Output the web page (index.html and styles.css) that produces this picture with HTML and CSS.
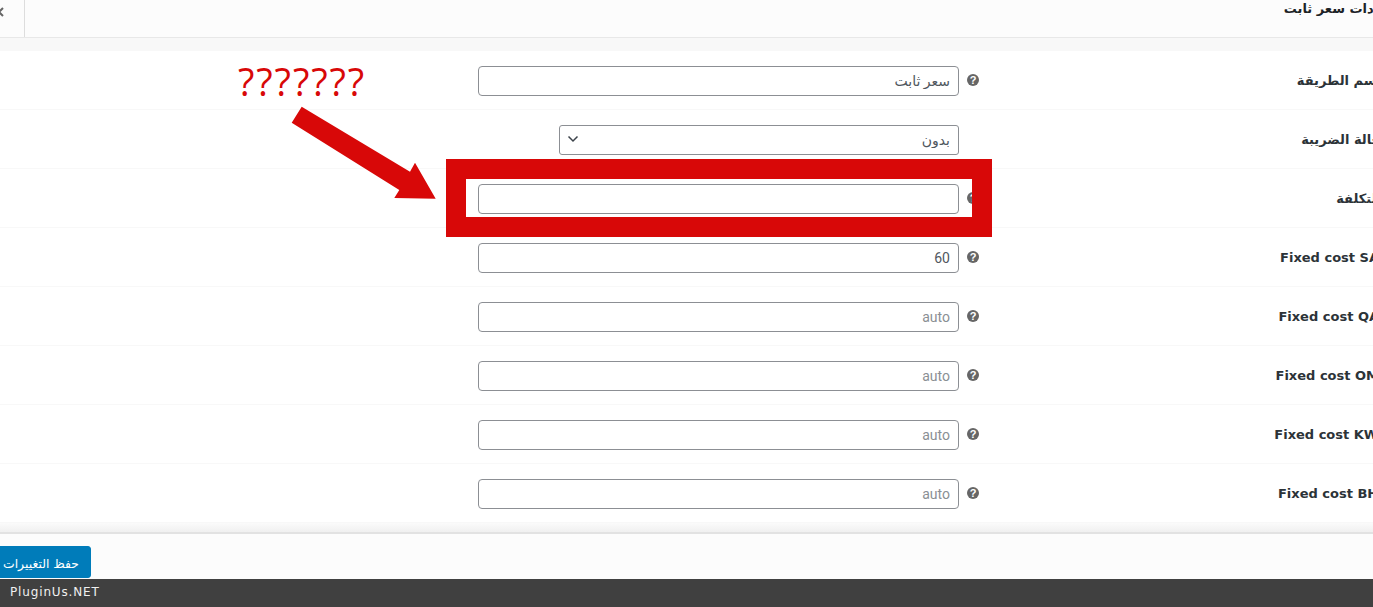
FILE: index.html
```html
<!DOCTYPE html>
<html lang="ar">
<head>
  <meta charset="UTF-8">
  <meta name="viewport" content="width=device-width, initial-scale=1.0">
  <title>إعدادات سعر ثابت</title>
  <link rel="stylesheet" href="styles.css">
</head>
<body>
  <div class="modal">
    <header class="modal-head">
      <div class="close-box">
        <svg class="close-icon" width="12" height="12" viewBox="0 0 12 12"><path d="M2 2l8 8M10 2l-8 8"/></svg>
      </div>
      <h2 class="modal-title" dir="rtl">إعدادات سعر ثابت</h2>
    </header>

    <div class="settings">
      <div class="row">
        <div class="field">
          <input class="text-input" type="text" dir="rtl" value="سعر ثابت">
          <span class="help">?</span>
        </div>
        <label class="row-label" dir="rtl">اسم الطريقة</label>
      </div>
      <div class="row">
        <div class="field field-select">
          <div class="select-wrap">
            <select class="select-input" dir="rtl"><option>بدون</option></select>
            <svg class="chevron" width="14" height="14" viewBox="0 0 14 14"><path d="M2.5 4.5L7 9l4.5-4.5"/></svg>
          </div>
        </div>
        <label class="row-label" dir="rtl">حالة الضريبة</label>
      </div>
      <div class="row">
        <div class="field">
          <input class="text-input" type="text" dir="rtl">
          <span class="help">?</span>
        </div>
        <label class="row-label" dir="rtl">التكلفة</label>
      </div>
      <div class="row">
        <div class="field">
          <input class="text-input" type="text" dir="rtl" value="60">
          <span class="help">?</span>
        </div>
        <label class="row-label row-label-latin">Fixed cost SAR</label>
      </div>
      <div class="row">
        <div class="field">
          <input class="text-input" type="text" dir="rtl" placeholder="auto">
          <span class="help">?</span>
        </div>
        <label class="row-label row-label-latin">Fixed cost QAR</label>
      </div>
      <div class="row">
        <div class="field">
          <input class="text-input" type="text" dir="rtl" placeholder="auto">
          <span class="help">?</span>
        </div>
        <label class="row-label row-label-latin">Fixed cost OMR</label>
      </div>
      <div class="row">
        <div class="field">
          <input class="text-input" type="text" dir="rtl" placeholder="auto">
          <span class="help">?</span>
        </div>
        <label class="row-label row-label-latin">Fixed cost KWD</label>
      </div>
      <div class="row">
        <div class="field">
          <input class="text-input" type="text" dir="rtl" placeholder="auto">
          <span class="help">?</span>
        </div>
        <label class="row-label row-label-latin">Fixed cost BHD</label>
      </div>
    </div>

    <div class="shade"></div>
    <footer class="modal-foot">
      <button class="save-button" dir="rtl">حفظ التغييرات</button>
    </footer>
  </div>

  <div class="credit">PluginUs.NET</div>

  <!-- annotation drawn over the screenshot -->
  <div class="note-text">???????</div>
  <svg class="note-arrow" width="1373" height="607" viewBox="0 0 1373 607">
    <polygon points="301.7,106.7 291.7,122.7 399.3,190 394.3,198 435.7,198.7 415,162.7 410,171.7"/>
  </svg>
  <div class="note-box"></div>
</body>
</html>
```

FILE: styles.css
```css
html, body {
  margin: 0;
  padding: 0;
  height: 607px;
  overflow: hidden;
  background-color: #fff;
}
body {
  position: relative;
  display: flex;
  flex-direction: column;
  width: 1373px;
  font-family: "DejaVu Sans", sans-serif;
  color: #2c3338;
}
.modal {
  width: 1381px;
  height: 579px;
  display: flex;
  flex-direction: column;
  background-color: #f8f8f8;
}
.modal-head {
  height: 37px;
  display: flex;
  justify-content: space-between;
  background-color: #fcfcfc;
  border-bottom: 1px solid #e8e8e8;
}
.close-box {
  width: 24px;
  border-right: 1px solid #ddd;
  position: relative;
  overflow: hidden;
}
.close-icon {
  position: absolute;
  left: -7px;
  top: 6px;
}
.close-icon path {
  fill: none;
  stroke: #666;
  stroke-width: 2;
}
.modal-title {
  margin: 0 -18px 0 0;
  font-size: 13px;
  line-height: 16px;
  padding-top: 1px;
  font-weight: 700;
  color: #1d2327;
}
.settings {
  margin-top: 13px;
  background-color: #fff;
}
.row {
  height: 59px;
  box-sizing: border-box;
  padding-top: 2px;
  display: flex;
  align-items: center;
  justify-content: space-between;
  border-bottom: 1px solid #f8f8f8;
}
.field {
  margin-left: 478px;
  display: flex;
  align-items: center;
  gap: 8px;
}
.field-select {
  padding-left: 81px;
  padding-right: 20px;
}
.text-input {
  width: 481px;
  height: 30px;
  box-sizing: border-box;
  padding: 0 8px;
  border: 1px solid #8c8f94;
  border-radius: 4px;
  background-color: #fff;
  font-family: Roboto, "DejaVu Sans", sans-serif;
  font-size: 14px;
  color: #50575e;
  outline: none;
}
.text-input::placeholder {
  color: #8a8f94;
  opacity: 1;
}
.select-wrap {
  position: relative;
}
.select-input {
  display: block;
  width: 400px;
  height: 30px;
  box-sizing: border-box;
  padding: 0 8px;
  border: 1px solid #8c8f94;
  border-radius: 3px;
  background-color: #fff;
  font-family: "DejaVu Sans", sans-serif;
  font-size: 14px;
  color: #50575e;
  appearance: none;
}
.chevron {
  position: absolute;
  left: 7px;
  top: 7px;
}
.chevron path {
  fill: none;
  stroke: #3c434a;
  stroke-width: 1.5;
}
.help {
  width: 12px;
  height: 12px;
  margin-top: -3px;
  border-radius: 50%;
  background-color: #666;
  color: #fff;
  font-family: "Liberation Sans", sans-serif;
  font-size: 11px;
  font-weight: 700;
  line-height: 12px;
  text-align: center;
}
.row-label {
  margin-top: -1px;
  font-size: 13px;
  font-weight: 700;
  white-space: nowrap;
}
.row-label-latin {
  margin-right: -8px;
}
.shade {
  height: 9px;
  background: linear-gradient(#fbfbfb, #f0f0f0);
}
.modal-foot {
  flex: 1;
  display: flex;
  align-items: flex-end;
  background-color: #fcfcfc;
  border-top: 2px solid #e2e2e2;
}
.save-button {
  margin-left: -9px;
  margin-bottom: 1px;
  width: 100px;
  height: 32px;
  padding: 2px 0 0;
  border: 1px solid #007cba;
  border-radius: 3px;
  background-color: #007cba;
  color: #fff;
  font-family: "DejaVu Sans", sans-serif;
  font-size: 12.4px;
  font-weight: 400;
}
.credit {
  height: 28px;
  line-height: 27px;
  padding-left: 10px;
  background-color: #404040;
  color: #f0f0f0;
  font-family: "DejaVu Sans", sans-serif;
  font-size: 12px;
  letter-spacing: 0.85px;
}
.note-text {
  position: absolute;
  left: 238px;
  top: 54px;
  font-family: "Open Sans", sans-serif;
  font-size: 38px;
  letter-spacing: 1.9px;
  line-height: 54px;
  color: #d80808;
}
.note-arrow {
  position: absolute;
  left: 0;
  top: 0;
}
.note-arrow polygon {
  fill: #d80808;
}
.note-box {
  position: absolute;
  left: 446px;
  top: 159px;
  width: 506px;
  height: 38px;
  border: 20px solid #d80808;
}
```
